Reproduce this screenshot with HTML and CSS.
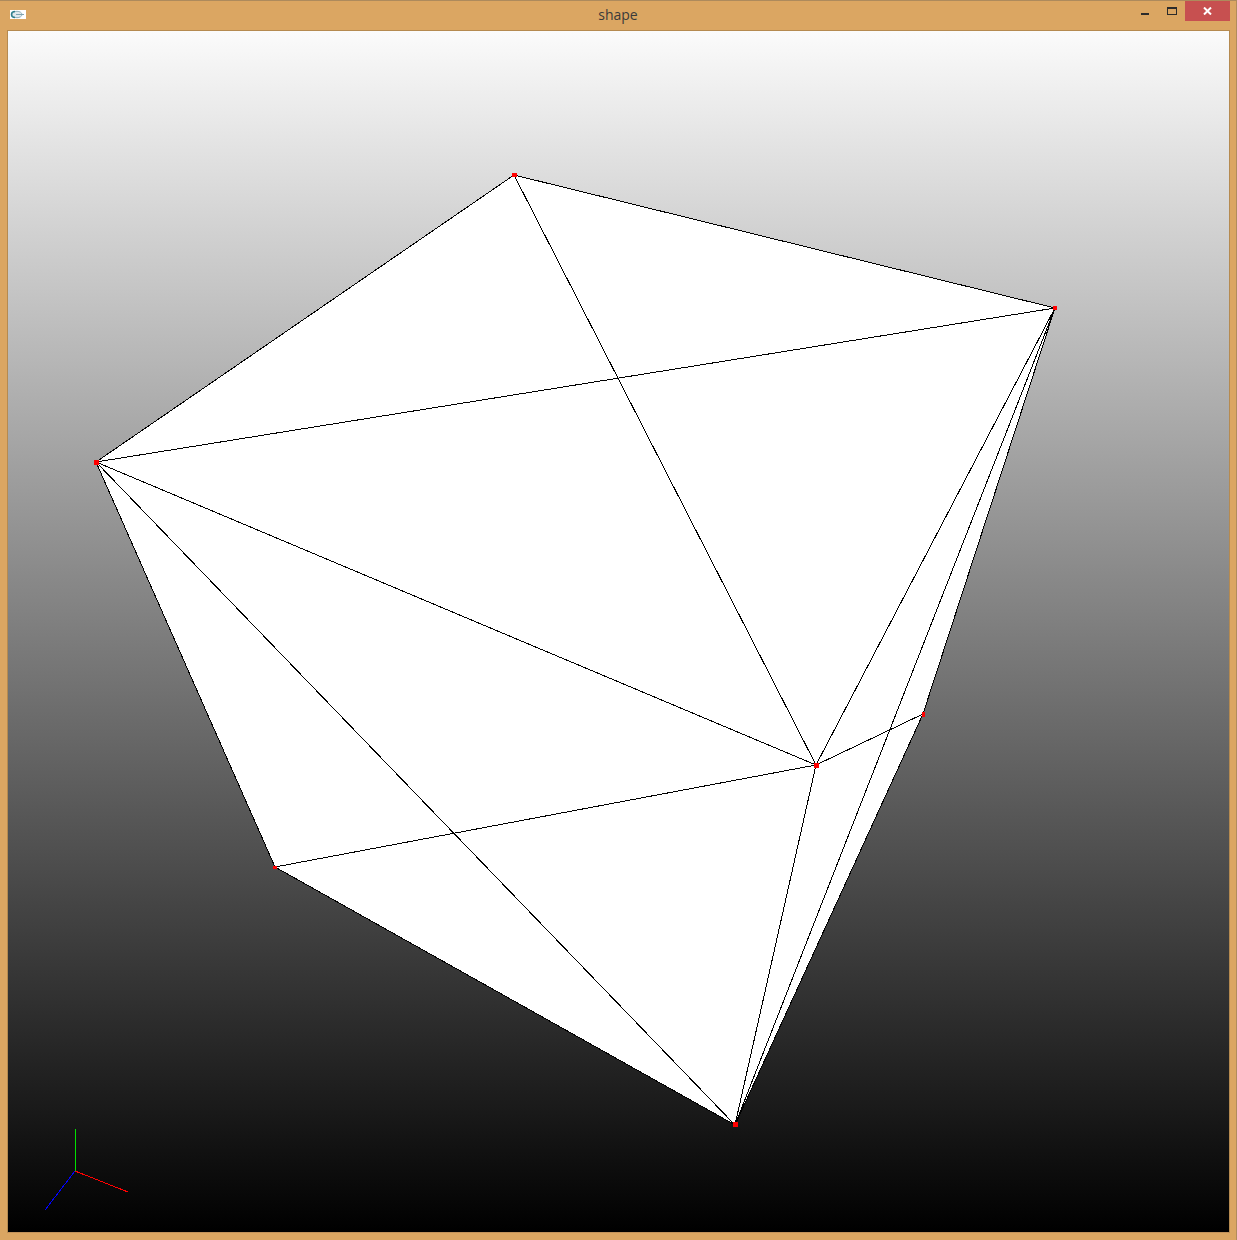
FILE: index.html
```html
<!DOCTYPE html>
<html lang="en">
<head>
    <meta charset="UTF-8">
    <meta name="viewport" content="width=device-width, initial-scale=1.0">
    <title>shape</title>
    <link rel="stylesheet" href="styles.css">
</head>
<body>

<div class="window">
    <div class="titlebar">
        <svg class="app-icon" width="16" height="9" viewBox="0 0 16 9">
            <rect width="16" height="9" fill="#fff"/>
            <ellipse cx="7" cy="4.500" rx="5" ry="3.200" fill="#dfe9ed" stroke="#8fb0bc" stroke-width="1"/>
            <path d="M5 1.500C2.500 1.500 1.500 3 1.500 4.500C1.500 6 2.500 7.500 5 7.500" fill="none" stroke="#2f7f8c" stroke-width="1.500"/>
            <path d="M6 4.500H14" stroke="#7fa3b0" stroke-width="1"/>
        </svg>
        <div class="title">shape</div>
        <div class="controls">
            <div class="btn-min"></div>
            <div class="btn-max"></div>
            <div class="btn-close">
                <svg width="9" height="8" viewBox="0 0 9 8">
                    <path d="M1 0.500L8 7.500M8 0.500L1 7.500" stroke="#fff" stroke-width="2" fill="none"/>
                </svg>
            </div>
        </div>
    </div>
    <div class="viewport">
        <svg class="scene" width="1221" height="1201" viewBox="8 31 1221 1201">
            <polygon class="face" points="514,175 1055,308 923,714 735,1125 275,867 96,462"/>
            <g class="edges">
                <line x1="514" y1="175" x2="1055" y2="308"/>
                <line x1="514" y1="175" x2="96" y2="462"/>
                <line x1="514" y1="175" x2="816" y2="765"/>
                <line x1="1055" y1="308" x2="96" y2="462"/>
                <line x1="1055" y1="308" x2="816" y2="765"/>
                <line x1="1055" y1="308" x2="735" y2="1125"/>
                <line x1="1055" y1="308" x2="923" y2="714"/>
                <line x1="96" y1="462" x2="816" y2="765"/>
                <line x1="96" y1="462" x2="275" y2="867"/>
                <line x1="96" y1="462" x2="735" y2="1125"/>
                <line x1="816" y1="765" x2="923" y2="714"/>
                <line x1="816" y1="765" x2="275" y2="867"/>
                <line x1="816" y1="765" x2="735" y2="1125"/>
                <line x1="923" y1="714" x2="735" y2="1125"/>
                <line x1="275" y1="867" x2="735" y2="1125"/>
            </g>
            <g class="points">
                <rect x="512" y="173" width="5" height="4"/>
                <rect x="1053" y="306" width="4" height="4"/>
                <rect x="94" y="460" width="5" height="5"/>
                <rect x="814" y="763" width="5" height="5"/>
                <rect x="922" y="712" width="3" height="5"/>
                <rect x="273" y="866" width="4" height="3"/>
                <rect x="733" y="1122" width="5" height="5"/>
            </g>
            <line class="axis-y" x1="75.500" y1="1129" x2="75.500" y2="1171"/>
            <line class="axis-x" x1="75" y1="1171" x2="128" y2="1192"/>
            <line class="axis-z" x1="75" y1="1171" x2="45" y2="1210"/>
        </svg>
    </div>
</div>

</body>
</html>
```

FILE: styles.css
```css
html, body {
    margin: 0;
    padding: 0;
    background-color: #dba662;
}
.window {
    width: 1237px;
    height: 1240px;
    box-sizing: border-box;
    display: flex;
    flex-direction: column;
    background-color: #dba662;
    border-top: 1px solid #ad8a5c;
    border-right: 1px solid #b08c5c;
    overflow: hidden;
}
.titlebar {
    height: 29px;
    flex-shrink: 0;
    display: flex;
    position: relative;
    font-family: "Open Sans", "Noto Sans", sans-serif;
    font-size: 14px;
    color: #3a3a3a;
}
.app-icon {
    margin: 9px 0 0 10px;
}
.title {
    position: absolute;
    left: 0;
    right: 0;
    top: 4px;
    text-align: center;
}
.controls {
    margin-left: auto;
    display: flex;
    align-items: flex-start;
}
.btn-min {
    width: 8px;
    height: 2px;
    margin: 12px 18px 0 0;
    background-color: #2b2b2b;
}
.btn-max {
    width: 8px;
    height: 5px;
    margin: 6px 8px 0 0;
    border: 1px solid #2b2b2b;
    border-top-width: 2px;
    box-sizing: content-box;
}
.btn-close {
    width: 45px;
    height: 20px;
    margin-right: 6px;
    background-color: #c75050;
    display: flex;
    align-items: center;
    justify-content: center;
}
.viewport {
    margin: 0 6px 7px 7px;
    border: 1px solid #b58a50;
    border-bottom-color: #c2925a;
    flex: 1;
    min-height: 0;
    background: linear-gradient(to bottom, #fbfbfb, #000000);
}
.scene {
    display: block;
    shape-rendering: crispEdges;
}
.face {
    fill: #ffffff;
}
.edges line {
    stroke: #000000;
    stroke-width: 1;
}
.points rect {
    fill: #ff0000;
}
.axis-y {
    stroke: #00e000;
    stroke-width: 1;
}
.axis-x {
    stroke: #ff0000;
    stroke-width: 1;
}
.axis-z {
    stroke: #0000ff;
    stroke-width: 1;
}
```
